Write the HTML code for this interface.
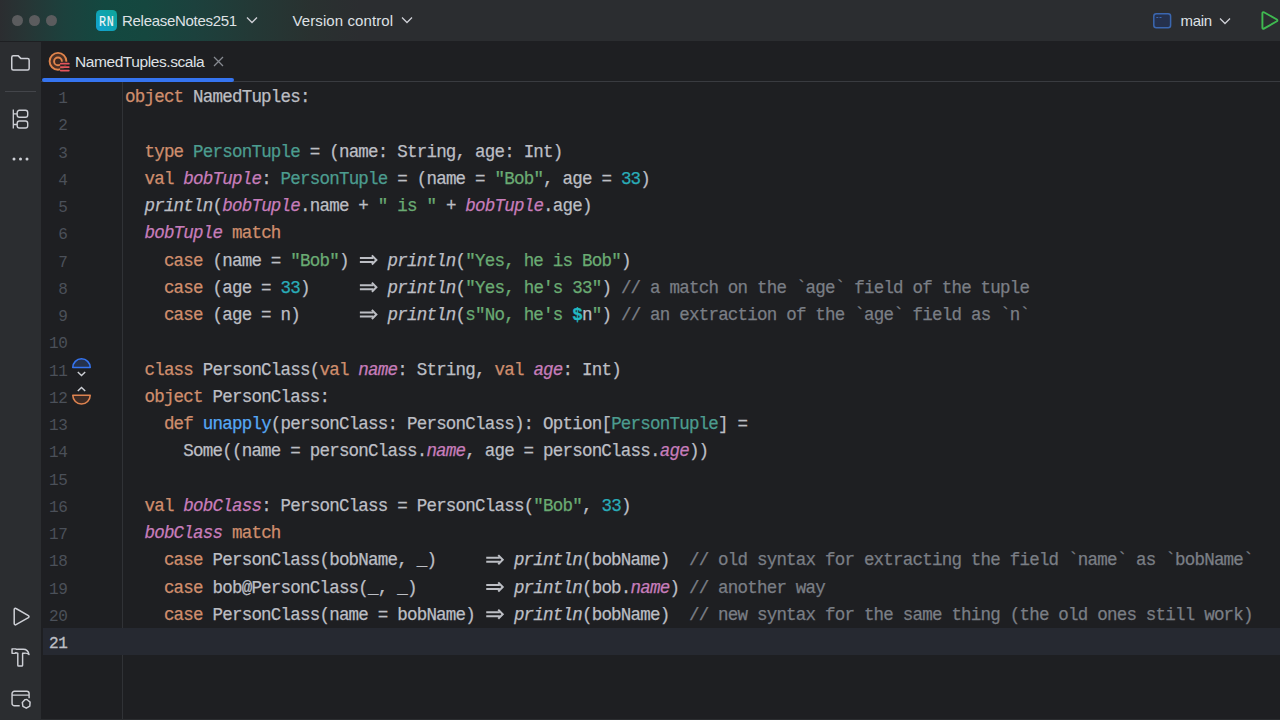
<!DOCTYPE html>
<html><head><meta charset="utf-8">
<style>
*{margin:0;padding:0;box-sizing:border-box}
html,body{width:1280px;height:720px;overflow:hidden;background:#1E1F22}
body{position:relative;font-family:"Liberation Sans",sans-serif}
#title{position:absolute;left:0;top:0;width:1280px;height:42px;background:linear-gradient(90deg,#2B2D30 0px,#273535 25px,#1C413D 65px,#134840 105px,#15473F 145px,#1C413D 195px,#233936 250px,#293130 310px,#2B2D30 360px);overflow:hidden;border-bottom:1px solid #1E1F22}
.tl{position:absolute;top:15px;width:11px;height:11px;border-radius:50%;background:#5B5C5E}
.ui{position:absolute;color:#DFE1E5;font-size:15px;white-space:nowrap;line-height:20px}
#stripe{position:absolute;left:0;top:42px;width:41px;height:678px;background:#2B2D30}
#tabbar{position:absolute;left:41px;top:41px;width:1239px;height:41px;border-bottom:1px solid #393B40}
#gutterline{position:absolute;left:122px;top:82px;width:1px;height:638px;background:#303236}
#curline{position:absolute;left:43px;top:628px;width:1237px;height:27px;background:#262931}
.ln{position:absolute;left:41px;width:26.5px;text-align:right;font-family:"Liberation Mono",monospace;font-size:16px;letter-spacing:-0.4px;padding-top:2px;color:#4B5059;line-height:27.25px;height:27.25px;white-space:pre}
.ln.cur{color:#BCBEC4;-webkit-text-stroke:0.35px #BCBEC4}
.code{position:absolute;left:125px;font-family:"Liberation Mono",monospace;font-size:17.5px;letter-spacing:-0.78px;color:#BCBEC4;white-space:pre;line-height:27.25px;height:27.25px;-webkit-text-stroke:0.25px}
.k{color:#CF8E6D}.s{color:#6AAB73}.n{color:#2AACB8}.c{color:#7A7E85}.v{color:#C77DBB;font-style:italic}.i{font-style:italic}.t{color:#4C9C8F}.f{color:#56A8F5}.d{color:#22B8C2;font-weight:bold}
.arr{display:inline-block;width:19.44px;height:1px;position:relative;vertical-align:baseline}
.arr svg{position:absolute;left:0;top:-13px}
svg.ic{position:absolute;overflow:visible}
</style></head><body>
<div id="title">
 <div class="tl" style="left:11.5px"></div><div class="tl" style="left:28.5px"></div><div class="tl" style="left:45.5px"></div>
 <div style="position:absolute;left:96px;top:10px;width:21px;height:21px;border-radius:4.5px;background:linear-gradient(225deg,#0EA59A 0%,#0FA3B5 55%,#13A2D6 100%)"></div>
 <div id="rn" style="position:absolute;left:99.3px;top:13.5px;height:16px;font-family:'Liberation Mono',monospace;font-size:14.6px;line-height:16px;color:#F4F6F8;transform-origin:0 0;transform:scaleX(0.80);letter-spacing:0.9px;-webkit-text-stroke:0.15px #F4F6F8;white-space:pre">RN</div>
 <div class="ui" id="projname" style="left:122px;top:11px;letter-spacing:-0.29px">ReleaseNotes251</div>
 <svg class="ic" style="left:246px;top:16px" width="12" height="8" viewBox="0 0 12 8"><path d="M1 1.5L6 6.5L11 1.5" fill="none" stroke="#CED0D6" stroke-width="1.3"/></svg>
 <div class="ui" id="vcs" style="left:292.5px;top:11px;letter-spacing:0.1px">Version control</div>
 <svg class="ic" style="left:401px;top:16px" width="12" height="8" viewBox="0 0 12 8"><path d="M1 1.5L6 6.5L11 1.5" fill="none" stroke="#CED0D6" stroke-width="1.3"/></svg>
 <svg class="ic" style="left:1153px;top:12.5px" width="19" height="16" viewBox="0 0 19 16"><rect x="0.8" y="0.8" width="16.8" height="14" rx="2.5" fill="#25314D" stroke="#3B67B0" stroke-width="1.5"/><path d="M3.3 4.5H5.3M6.5 4.5H8.5" stroke="#3B67B0" stroke-width="1.2"/></svg>
 <div class="ui" id="branch" style="left:1180.5px;top:11px;letter-spacing:-0.3px">main</div>
 <svg class="ic" style="left:1219px;top:17px" width="12" height="8" viewBox="0 0 12 8"><path d="M1 1.5L6 6.5L11 1.5" fill="none" stroke="#CED0D6" stroke-width="1.3"/></svg>
 <svg class="ic" style="left:1260px;top:11px" width="19" height="19" viewBox="0 0 19 19"><path d="M2.4 2.2C2.4 1.4 3.2 0.9 3.9 1.3L16.9 8.5C17.6 8.9 17.6 9.9 16.9 10.3L3.9 17.6C3.2 18 2.4 17.5 2.4 16.7Z" fill="none" stroke="#3FB950" stroke-width="1.9" stroke-linejoin="round"/></svg>
</div>
<div id="stripe">
 <svg class="ic" style="left:10px;top:11.8px" width="21" height="17" viewBox="0 0 21 17"><path d="M1.75 3.4C1.75 2.5 2.4 1.85 3.3 1.85H8.3L11 4.6H17.6C18.5 4.6 19.15 5.3 19.15 6.2V14.4C19.15 15.3 18.5 15.95 17.6 15.95H3.3C2.4 15.95 1.75 15.3 1.75 14.4Z" fill="none" stroke="#CED0D6" stroke-width="1.5" stroke-linejoin="round"/></svg>
 <div style="position:absolute;left:5px;top:49px;width:31px;height:1px;background:#43454A"></div>
 <svg class="ic" style="left:12px;top:67px" width="18" height="20" viewBox="0 0 18 20"><path d="M1.3 0.5V19.5M1.3 4.8H5M1.3 15.5H5" fill="none" stroke="#CED0D6" stroke-width="1.3"/><rect x="5.2" y="1.3" width="10.5" height="7" rx="2.2" fill="none" stroke="#CED0D6" stroke-width="1.4"/><rect x="5.2" y="12" width="10.5" height="7" rx="2.2" fill="none" stroke="#CED0D6" stroke-width="1.4"/></svg>
 <svg class="ic" style="left:11px;top:114px" width="20" height="6" viewBox="0 0 20 6"><circle cx="3" cy="3" r="1.5" fill="#CED0D6"/><circle cx="9.5" cy="3" r="1.5" fill="#CED0D6"/><circle cx="16" cy="3" r="1.5" fill="#CED0D6"/></svg>
 <svg class="ic" style="left:12px;top:565px" width="19" height="19" viewBox="0 0 19 19"><path d="M2.2 2.6C2.2 1.6 3.2 1 4 1.5L16.4 8.6C17.2 9.1 17.2 10.1 16.4 10.6L4 17.7C3.2 18.2 2.2 17.6 2.2 16.6Z" fill="none" stroke="#CED0D6" stroke-width="1.5" stroke-linejoin="round"/></svg>
 <svg class="ic" style="left:11px;top:605px" width="20" height="21" viewBox="0 0 20 21"><path d="M1.05 1.85H4.6Q5.6 2.6 6.6 2.3H12.3C15.2 2.3 17.4 4.4 18 7.6C16.8 6.4 15.6 5.9 13.2 6.2H11.6V18.2Q11.6 19 10.8 19H7.6Q6.8 19 6.8 18.2V6.3Q5.6 6.3 4.6 5.7Q4 6.35 3.5 6.35H1.05Z" fill="none" stroke="#CED0D6" stroke-width="1.45" stroke-linejoin="round"/></svg>
 <svg class="ic" style="left:11px;top:648px" width="21" height="20" viewBox="0 0 21 20"><path d="M8.7 15.7H3.4C2.1 15.7 1.05 14.7 1.05 13.4V3.6C1.05 2.3 2.1 1.3 3.4 1.3H15.8C17.1 1.3 18.1 2.3 18.1 3.6V8.2M1.05 5.1H18.1" fill="none" stroke="#CED0D6" stroke-width="1.45"/><path d="M15.9 9.5L19.1 12.1L18.8 16.2L15.3 18.2L11.9 16.4L11.3 12.4L14.1 9.6Z" fill="none" stroke="#CED0D6" stroke-width="1.45" stroke-linejoin="round"/></svg>
</div>
<div id="tabbar">
 <div style="position:absolute;left:1px;top:37px;width:192px;height:4px;border-radius:2px;background:#3574F0"></div>
 <div style="position:absolute;left:193px;top:40px;width:1046px;height:1px;background:#393B40"></div>
</div>
<svg class="ic" style="left:47px;top:50px" width="24" height="24" viewBox="0 0 24 24"><circle cx="11" cy="11.3" r="8.4" fill="#4A3026" stroke="#E0844B" stroke-width="1.9"/><circle cx="11" cy="11.4" r="3.9" fill="#3A2720" stroke="#E0844B" stroke-width="1.9"/><path d="M13.2 13.3H22M13.2 16.8H22M13.2 20.3H22" stroke="#1E1F22" stroke-width="3.2"/><path d="M13.8 13.7H21.8M13.8 17.1H21.8M13.8 20.6H21.8" stroke="#E5555B" stroke-width="1.8" stroke-linecap="round"/></svg>
<div class="ui" id="tabname" style="left:75px;top:52px;color:#DFE1E5;font-size:15.5px;letter-spacing:-0.42px">NamedTuples.scala</div>
<svg class="ic" style="left:213px;top:56px" width="11" height="11" viewBox="0 0 11 11"><path d="M1 1L10 10M10 1L1 10" stroke="#868A91" stroke-width="1.3"/></svg>
<div id="gutterline"></div>
<div id="curline"></div>
<svg class="ic" style="left:71px;top:358px" width="22" height="50" viewBox="0 0 22 50"><path d="M1.8 9.5A8.7 8.7 0 0 1 19.2 9.5Z" fill="#25324D" stroke="#3574F0" stroke-width="1.6" stroke-linejoin="round"/><path d="M6.8 14L10.5 17.6L14.2 14" fill="none" stroke="#CED0D6" stroke-width="1.4"/><path d="M6.8 33L10.5 29.4L14.2 33" fill="none" stroke="#CED0D6" stroke-width="1.4"/><path d="M1.8 37.3A8.7 8.7 0 0 0 19.2 37.3Z" fill="#3D2B25" stroke="#DE8350" stroke-width="1.6" stroke-linejoin="round"/></svg>
<div style="position:absolute;left:0;top:719px;width:1280px;height:1px;background:#2B2D30"></div>
<div class="code" style="top:84.22px"><span class="k">object</span> NamedTuples:</div>
<div class="ln" style="top:84.22px">1</div>
<div class="code" style="top:111.47px"></div>
<div class="ln" style="top:111.47px">2</div>
<div class="code" style="top:138.72px">  <span class="k">type</span> <span class="t">PersonTuple</span> = (name: String, age: Int)</div>
<div class="ln" style="top:138.72px">3</div>
<div class="code" style="top:165.97px">  <span class="k">val</span> <span class="v">bobTuple</span>: <span class="t">PersonTuple</span> = (name = <span class="s">"Bob"</span>, age = <span class="n">33</span>)</div>
<div class="ln" style="top:165.97px">4</div>
<div class="code" style="top:193.22px">  <span class="i">println</span>(<span class="v">bobTuple</span>.name + <span class="s">" is "</span> + <span class="v">bobTuple</span>.age)</div>
<div class="ln" style="top:193.22px">5</div>
<div class="code" style="top:220.47px">  <span class="v">bobTuple</span> <span class="k">match</span></div>
<div class="ln" style="top:220.47px">6</div>
<svg class="ic" style="left:358px;top:252px" width="22" height="18" viewBox="0 0 22 18"><g transform="translate(0.28 0.00)" fill="none" stroke="#BCBEC4" stroke-width="2"><path d="M1.6 5.9H15.2M1.6 10H15.2"/><path d="M13.6 3.4L18.1 7.95L13.6 12.5" stroke-linejoin="miter"/></g></svg>
<div class="code" style="top:247.72px">    <span class="k">case</span> (name = <span class="s">"Bob"</span>) <span class="arr"></span> <span class="i">println</span>(<span class="s">"Yes, he is Bob"</span>)</div>
<div class="ln" style="top:247.72px">7</div>
<svg class="ic" style="left:358px;top:279px" width="22" height="18" viewBox="0 0 22 18"><g transform="translate(0.28 0.25)" fill="none" stroke="#BCBEC4" stroke-width="2"><path d="M1.6 5.9H15.2M1.6 10H15.2"/><path d="M13.6 3.4L18.1 7.95L13.6 12.5" stroke-linejoin="miter"/></g></svg>
<div class="code" style="top:274.97px">    <span class="k">case</span> (age = <span class="n">33</span>)     <span class="arr"></span> <span class="i">println</span>(<span class="s">"Yes, he's 33"</span>) <span class="c">// a match on the `age` field of the tuple</span></div>
<div class="ln" style="top:274.97px">8</div>
<svg class="ic" style="left:358px;top:306px" width="22" height="18" viewBox="0 0 22 18"><g transform="translate(0.28 0.50)" fill="none" stroke="#BCBEC4" stroke-width="2"><path d="M1.6 5.9H15.2M1.6 10H15.2"/><path d="M13.6 3.4L18.1 7.95L13.6 12.5" stroke-linejoin="miter"/></g></svg>
<div class="code" style="top:302.22px">    <span class="k">case</span> (age = n)      <span class="arr"></span> <span class="i">println</span>(<span class="s">s"No, he's </span><span class="d">$</span>n<span class="s">"</span>) <span class="c">// an extraction of the `age` field as `n`</span></div>
<div class="ln" style="top:302.22px">9</div>
<div class="code" style="top:329.47px"></div>
<div class="ln" style="top:329.47px">10</div>
<div class="code" style="top:356.72px">  <span class="k">class</span> PersonClass(<span class="k">val</span> <span class="v">name</span>: String, <span class="k">val</span> <span class="v">age</span>: Int)</div>
<div class="ln" style="top:356.72px">11</div>
<div class="code" style="top:383.97px">  <span class="k">object</span> PersonClass:</div>
<div class="ln" style="top:383.97px">12</div>
<div class="code" style="top:411.22px">    <span class="k">def</span> <span class="f">unapply</span>(personClass: PersonClass): Option[<span class="t">PersonTuple</span>] =</div>
<div class="ln" style="top:411.22px">13</div>
<div class="code" style="top:438.47px">      Some((name = personClass.<span class="v">name</span>, age = personClass.<span class="v">age</span>))</div>
<div class="ln" style="top:438.47px">14</div>
<div class="code" style="top:465.72px"></div>
<div class="ln" style="top:465.72px">15</div>
<div class="code" style="top:492.97px">  <span class="k">val</span> <span class="v">bobClass</span>: PersonClass = PersonClass(<span class="s">"Bob"</span>, <span class="n">33</span>)</div>
<div class="ln" style="top:492.97px">16</div>
<div class="code" style="top:520.22px">  <span class="v">bobClass</span> <span class="k">match</span></div>
<div class="ln" style="top:520.22px">17</div>
<svg class="ic" style="left:484px;top:551px" width="22" height="18" viewBox="0 0 22 18"><g transform="translate(0.64 0.75)" fill="none" stroke="#BCBEC4" stroke-width="2"><path d="M1.6 5.9H15.2M1.6 10H15.2"/><path d="M13.6 3.4L18.1 7.95L13.6 12.5" stroke-linejoin="miter"/></g></svg>
<div class="code" style="top:547.47px">    <span class="k">case</span> PersonClass(bobName, _)     <span class="arr"></span> <span class="i">println</span>(bobName)  <span class="c">// old syntax for extracting the field `name` as `bobName`</span></div>
<div class="ln" style="top:547.47px">18</div>
<svg class="ic" style="left:484px;top:579px" width="22" height="18" viewBox="0 0 22 18"><g transform="translate(0.64 0.00)" fill="none" stroke="#BCBEC4" stroke-width="2"><path d="M1.6 5.9H15.2M1.6 10H15.2"/><path d="M13.6 3.4L18.1 7.95L13.6 12.5" stroke-linejoin="miter"/></g></svg>
<div class="code" style="top:574.72px">    <span class="k">case</span> bob@PersonClass(_, _)       <span class="arr"></span> <span class="i">println</span>(bob.<span class="v">name</span>) <span class="c">// another way</span></div>
<div class="ln" style="top:574.72px">19</div>
<svg class="ic" style="left:484px;top:606px" width="22" height="18" viewBox="0 0 22 18"><g transform="translate(0.64 0.25)" fill="none" stroke="#BCBEC4" stroke-width="2"><path d="M1.6 5.9H15.2M1.6 10H15.2"/><path d="M13.6 3.4L18.1 7.95L13.6 12.5" stroke-linejoin="miter"/></g></svg>
<div class="code" style="top:601.97px">    <span class="k">case</span> PersonClass(name = bobName) <span class="arr"></span> <span class="i">println</span>(bobName)  <span class="c">// new syntax for the same thing (the old ones still work)</span></div>
<div class="ln" style="top:601.97px">20</div>
<div class="code" style="top:629.22px"></div>
<div class="ln cur" style="top:629.22px">21</div>
</body></html>
